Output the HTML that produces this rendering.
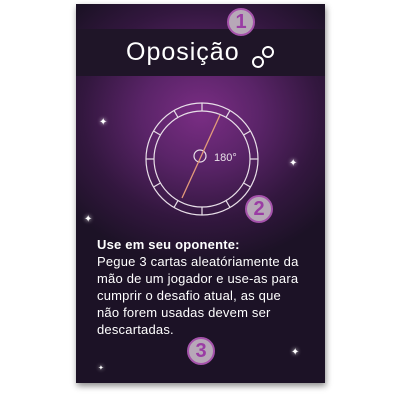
<!DOCTYPE html>
<html><head><style>
body{margin:0;width:400px;height:400px;background:#fff;position:relative;overflow:hidden;font-family:"Liberation Sans",sans-serif}
.card{position:absolute;left:76px;top:4px;width:249px;height:379px;overflow:hidden;
background:radial-gradient(ellipse 170px 150px at 125px 110px,#7a2d84 0%,#5a2468 35%,#33173f 70%,#1c1226 100%);
box-shadow:1px 3px 6px rgba(0,0,0,.45)}
.band{position:absolute;left:0;top:25px;width:249px;height:47px;background:#1f1528;}
.title{position:absolute;left:50px;top:34px;color:#fff;font-size:25px;letter-spacing:1px}
.num{position:absolute;width:24px;height:24px;border-radius:50%;background:#b7a8b8;border:2px solid #a552ab;color:#9a3ca4;font-weight:bold;font-size:20px;text-align:center;line-height:24px}
.txt{position:absolute;left:21px;top:232px;color:#fff;font-size:13px;line-height:17px;width:240px;white-space:nowrap;letter-spacing:0.2px}
.star{position:absolute;color:#fff;font-size:10px;text-shadow:0 0 4px #fff}
</style></head><body>
<div class="card">
<div class="band"></div>
<div class="title">Oposição</div>
<svg width="249" height="379" style="position:absolute;left:0;top:0">
<g stroke="#fff" stroke-width="2" fill="none">
<circle cx="182" cy="58" r="5"/><circle cx="192" cy="48" r="5"/>
</g>
<g stroke="#e8dfe8" stroke-width="1.2" fill="none">
<circle cx="126" cy="155" r="56"/><circle cx="126" cy="155" r="48"/>
<circle cx="124" cy="152" r="6"/>
<g id="t">
<line x1="126" y1="99" x2="126" y2="107"/>
</g>
<use href="#t" transform="rotate(30 126 155)"/><use href="#t" transform="rotate(60 126 155)"/><use href="#t" transform="rotate(90 126 155)"/><use href="#t" transform="rotate(120 126 155)"/><use href="#t" transform="rotate(150 126 155)"/><use href="#t" transform="rotate(180 126 155)"/><use href="#t" transform="rotate(210 126 155)"/><use href="#t" transform="rotate(240 126 155)"/><use href="#t" transform="rotate(270 126 155)"/><use href="#t" transform="rotate(300 126 155)"/><use href="#t" transform="rotate(330 126 155)"/>
</g>
<line x1="144" y1="111" x2="106" y2="194" stroke="#e39a7a" stroke-width="1.3"/>
<text x="138" y="157" fill="#e8dfe8" font-size="11" font-family="Liberation Sans">180°</text>
</svg>
<div class="star" style="left:23px;top:113px">✦</div>
<div class="star" style="left:213px;top:154px">✦</div>
<div class="star" style="left:8px;top:210px">✦</div>
<div class="star" style="left:215px;top:343px">✦</div>
<div class="star" style="left:22px;top:360px;font-size:7px">✦</div>
<div class="txt"><b>Use em seu oponente:</b><br>Pegue 3 cartas aleatóriamente da<br>mão de um jogador e use-as para<br>cumprir o desafio atual, as que<br>não forem usadas devem ser<br>descartadas.</div>
</div>
<div class="num" style="left:227px;top:8px">1</div>
<div class="num" style="left:245px;top:195px">2</div>
<div class="num" style="left:187px;top:337px">3</div>
</body></html>
